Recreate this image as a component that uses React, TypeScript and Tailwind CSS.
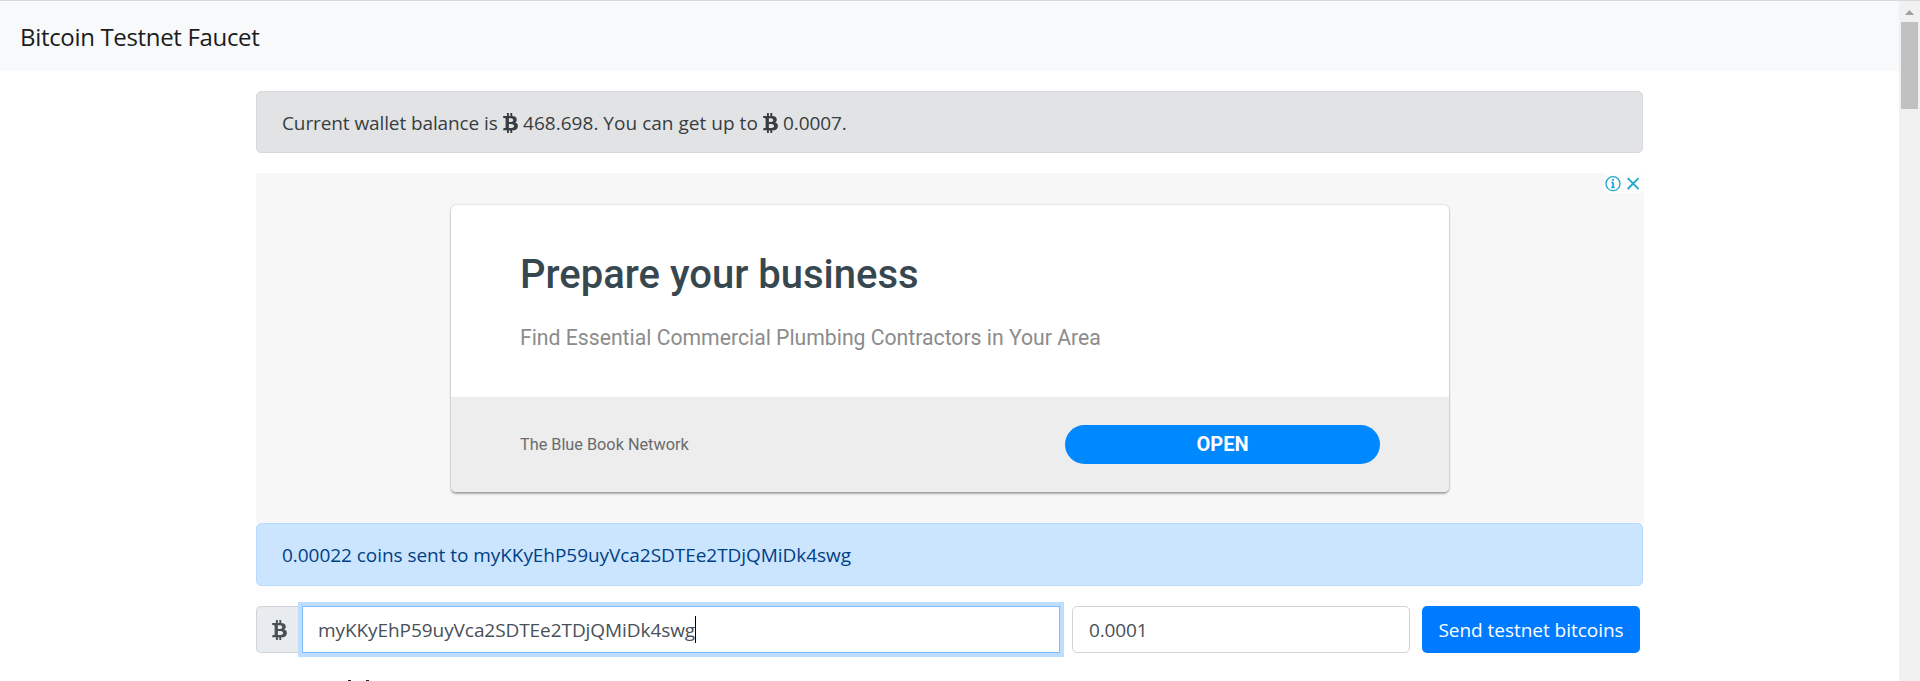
import { FaBtc } from "react-icons/fa";

function BitcoinSign() {
  return <FaBtc className="h-5 w-[15px] shrink-0" />;
}

function Navbar() {
  return (
    <nav className="flex h-[71px] items-center border-t border-[#d5d7da] bg-[#f8f9fa] pl-5">
      <a className="pt-px text-[24px] leading-[38px] tracking-[-0.33px] text-[#1b1c1d]">Bitcoin Testnet Faucet</a>
    </nav>
  );
}

function BalanceAlert() {
  return (
    <div className="mt-5 flex h-[62px] items-center rounded-[5px] border border-[#d6d8db] bg-[#e2e3e5] pt-[2px] pl-[25px] text-[#383d41]">
      <span className="w-[221px] tracking-[-0.1px]">Current wallet balance is</span>
      <BitcoinSign />
      <span className="w-[245px] pl-[5px] tracking-[0.03px]">468.698. You can get up to</span>
      <BitcoinSign />
      <span className="pl-[5px] tracking-[-0.1px]">0.0007.</span>
    </div>
  );
}

function AdChoices() {
  return (
    <div className="absolute top-0 right-0 flex h-5 w-10 items-center bg-white/80 pl-px">
      <svg width="38" height="20" viewBox="0 0 38 20" fill="none" stroke="#1fa8c9">
        <circle cx="8" cy="10.7" r="7" strokeWidth="1.3" />
        <path d="M8 9.2v5.3M6.4 9.3H8M6.3 14.4h3.4" strokeWidth="1.7" />
        <circle cx="8" cy="6.8" r="1.1" fill="#1fa8c9" stroke="none" />
        <path d="M22.7 5.2l10.8 10.8M33.5 5.2L22.7 16" strokeWidth="1.8" />
      </svg>
    </div>
  );
}

function Ad() {
  return (
    <section className="relative mt-5 mr-[-1px] h-[350px] bg-[#f7f7f7] pt-8 pl-[195px] font-['Roboto',sans-serif]">
      <div className="h-[287px] w-[998px] overflow-hidden rounded-[5px] bg-white shadow-[0_2px_2px_rgba(0,0,0,0.3),0_0_2px_rgba(0,0,0,0.25)]">
        <div className="h-48 px-[69px] pt-[46px]">
          <h2 className="text-[40px] leading-[47px] font-medium text-[#37474f]">Prepare your business</h2>
          <p className="mt-[27px] text-[21.2px] leading-[25px] text-[#8c8c8c]">
            Find Essential Commercial Plumbing Contractors in Your Area
          </p>
        </div>
        <div className="flex h-[95px] items-center justify-between bg-[#ededed] px-[69px]">
          <span className="text-[16.25px] text-[#6b6b6b]">The Blue Book Network</span>
          <button className="h-[39px] w-[315px] rounded-full bg-[#0088ff] pb-px text-[20px] font-bold text-white">OPEN</button>
        </div>
      </div>
      <AdChoices />
    </section>
  );
}

function FaucetForm() {
  return (
    <form className="mt-5 flex h-[47px]">
      <span className="flex w-[46px] items-center justify-center rounded-l-[5px] border border-r-0 border-[#ced4da] bg-[#e9ecef] text-[#495057]">
        <BitcoinSign />
      </span>
      <div className="relative flex w-[758px] items-center border border-[#80bdff] bg-white pl-[15px] text-[#495057] shadow-[0_0_0_4px_#bfdeff]">
        <span className="tracking-[-0.07px]">myKKyEhP59uyVca2SDTEe2TDjQMiDk4swg</span>
        <span className="h-[27px] w-px bg-black" />
      </div>
      <div className="ml-3 flex w-[338px] items-center rounded-[5px] border border-[#ced4da] bg-white pl-4 tracking-[-0.15px] text-[#495057]">0.0001</div>
      <button type="button" className="ml-3 w-[218px] rounded-[5px] bg-[#007bff] tracking-[-0.03px] whitespace-nowrap text-white">
        Send testnet bitcoins
      </button>
    </form>
  );
}

function Scrollbar() {
  return (
    <div className="flex w-[21px] flex-col items-center border-t border-[#d5d7da] bg-[#f1f1f1]">
      <svg width="21" height="21" viewBox="0 0 21 21">
        <path d="M6 14l4.5-5 4.5 5z" fill="#a0a0a0" />
      </svg>
      <div className="h-[87px] w-[17px] bg-[#c1c1c1]" />
    </div>
  );
}

export default function App() {
  return (
    <div className="flex h-[681px] w-[1920px] overflow-hidden bg-white font-['Open_Sans','Noto_Sans',sans-serif] text-[19px] leading-[30px]">
      <div className="flex-1">
        <Navbar />
        <main className="ml-[256px] w-[1387px]">
          <BalanceAlert />
          <Ad />
          <div className="flex h-[63px] items-center rounded-[5px] border border-[#b8daff] bg-[#cce5ff] pl-[25px] tracking-[-0.05px] text-[#004085]">
            0.00022 coins sent to myKKyEhP59uyVca2SDTEe2TDjQMiDk4swg
          </div>
          <FaucetForm />
          <div className="mt-[27px] flex gap-[15px] pl-[92px]">
            <span className="h-px w-[3px] bg-[#212529]" />
            <span className="h-px w-[3px] bg-[#212529]" />
          </div>
        </main>
      </div>
      <Scrollbar />
    </div>
  );
}
